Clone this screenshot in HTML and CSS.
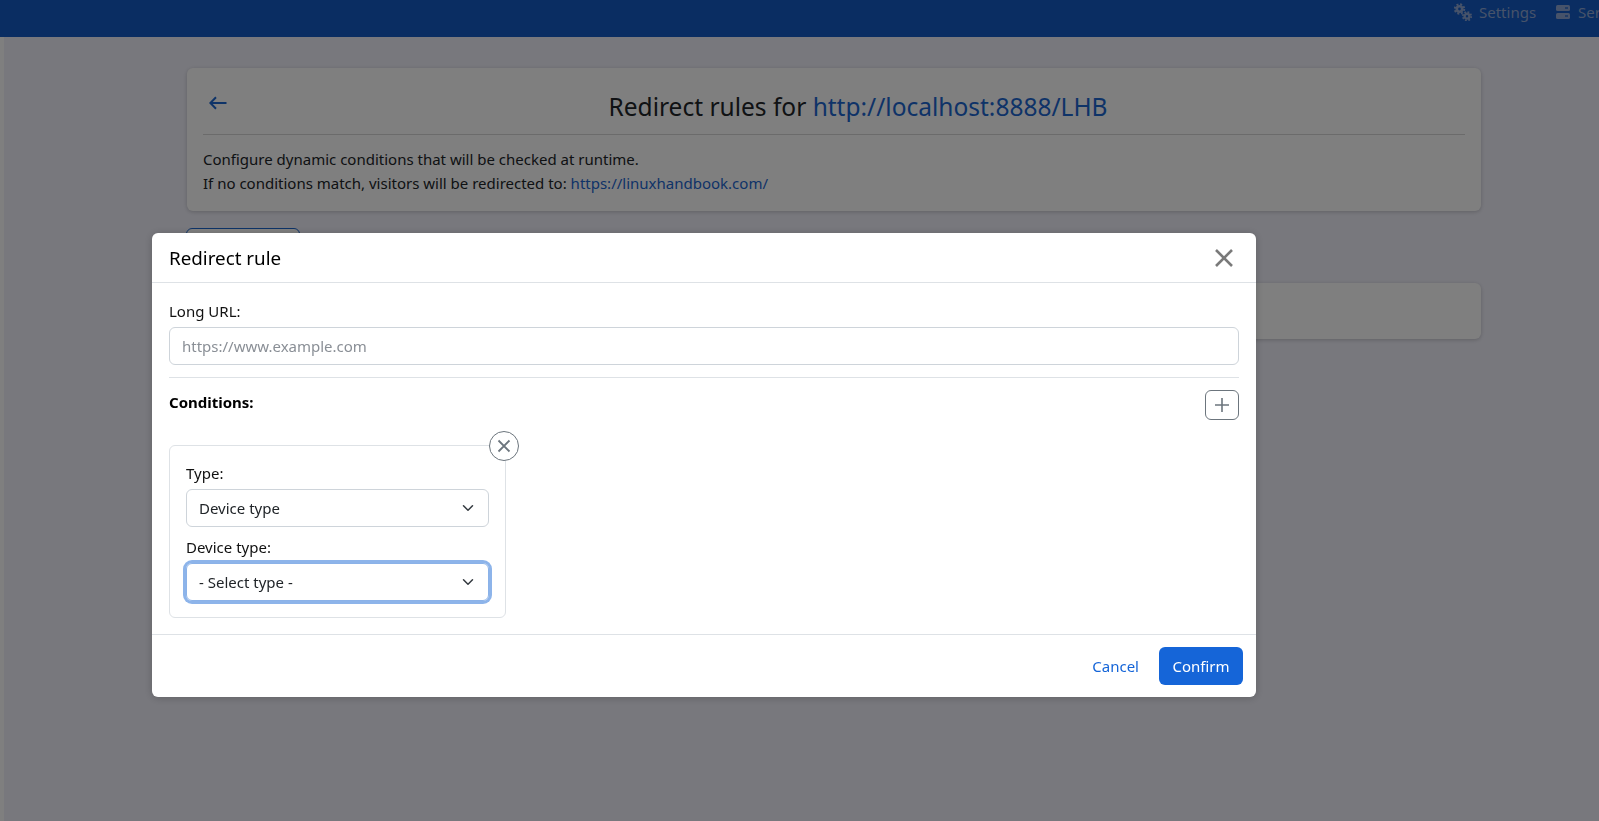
FILE: index.html
```html
<!DOCTYPE html>
<html lang="en">
<head>
    <meta charset="UTF-8">
    <title>Redirect rules</title>
    <link rel="stylesheet" href="styles.css">
</head>
<body>
    <!-- Top menu -->
    <nav class="topbar">
        <a class="topbar-link">
            <svg class="gears" viewBox="0 0 18 18">
                <circle cx="5.5" cy="6" r="2.7" fill="none" stroke="#8ea6d4" stroke-width="2.6"/>
                <circle cx="5.5" cy="6" r="4.7" fill="none" stroke="#8ea6d4" stroke-width="2" stroke-dasharray="2 1.7"/>
                <circle cx="13" cy="13.2" r="2.4" fill="none" stroke="#8ea6d4" stroke-width="2.4"/>
                <circle cx="13" cy="13.2" r="4.2" fill="none" stroke="#8ea6d4" stroke-width="1.8" stroke-dasharray="1.8 1.5"/>
            </svg>
            Settings
        </a>
        <a class="topbar-link">
            <svg class="servers" viewBox="0 0 14 14">
                <rect x="0" y="0" width="14" height="6" rx="1.5" fill="#8ea6d4"/>
                <rect x="0" y="8" width="14" height="6" rx="1.5" fill="#8ea6d4"/>
                <rect x="9" y="2.4" width="3" height="1.2" fill="#145bc4"/>
                <rect x="9" y="10.4" width="3" height="1.2" fill="#145bc4"/>
            </svg>
            Servers
        </a>
    </nav>

    <div class="layout">
        <div class="strip"></div>

        <!-- Page behind the dialog -->
        <main class="page">
            <section class="card head-card">
                <div class="head-row">
                    <a class="back-link">
                        <svg viewBox="0 0 18 14" width="18" height="14"><path d="M17.5 7H1.5M7 1.2 1.3 7 7 12.8" fill="none" stroke="#1c66d0" stroke-width="2"/></svg>
                    </a>
                    <h2 class="head-title">Redirect rules for <a class="page-link">http://localhost:8888/LHB</a></h2>
                </div>
                <hr class="head-line">
                <p class="head-text">Configure dynamic conditions that will be checked at runtime.<br>If no conditions match, visitors will be redirected to: <a class="page-link">https://linuxhandbook.com/</a></p>
            </section>
            <div class="add-rule"></div>
            <section class="card empty-card"></section>
        </main>
    </div>

    <div class="backdrop"></div>

    <!-- Dialog -->
    <div class="modal">
        <header class="modal-header">
            <h5 class="modal-title">Redirect rule</h5>
            <svg class="modal-close" viewBox="0 0 18 18"><path d="M1 1 17 17M17 1 1 17" stroke="#7a7a7a" stroke-width="2.6" fill="none"/></svg>
        </header>
        <div class="modal-body">
            <label class="field-label">Long URL:</label>
            <div class="input">https://www.example.com</div>
            <hr class="body-line">
            <div class="conditions-row">
                <b class="conditions-title">Conditions:</b>
                <button class="add-condition">
                    <svg viewBox="0 0 16 16" width="16" height="16"><path d="M8 1v14M1 8h14" stroke="#6c757d" stroke-width="1.6" fill="none"/></svg>
                </button>
            </div>
            <div class="condition">
                <button class="remove-condition">
                    <svg viewBox="0 0 16 16" width="16" height="16"><path d="M2.5 2.5 13.5 13.5M13.5 2.5 2.5 13.5" stroke="#6c757d" stroke-width="1.8" fill="none"/></svg>
                </button>
                <label class="field-label">Type:</label>
                <div class="select">Device type<svg class="caret" viewBox="0 0 16 16"><path d="m2 5 6 6 6-6" fill="none" stroke="#343a40" stroke-width="2" stroke-linecap="round" stroke-linejoin="round"/></svg></div>
                <label class="field-label second">Device type:</label>
                <div class="select focused">- Select type -<svg class="caret" viewBox="0 0 16 16"><path d="m2 5 6 6 6-6" fill="none" stroke="#343a40" stroke-width="2" stroke-linecap="round" stroke-linejoin="round"/></svg></div>
            </div>
        </div>
        <footer class="modal-footer">
            <a class="cancel">Cancel</a>
            <button class="confirm">Confirm</button>
        </footer>
    </div>
</body>
</html>
```

FILE: styles.css
```css
html, body {
    margin: 0;
    padding: 0;
    height: 100%;
    overflow: hidden;
}
body {
    font-family: "Noto Sans", sans-serif;
    font-size: 15px;
    color: #212529;
    background: #f1f1fb;
}
.topbar {
    height: 37px;
    box-sizing: border-box;
    padding-left: 1454px;
    background: #145bc4;
    display: flex;
    gap: 20px;
    color: #8ea6d4;
    white-space: nowrap;
    overflow: hidden;
}
.topbar-link {
    display: flex;
    align-items: center;
    gap: 7px;
    height: 24px;
}
.gears {
    width: 18px;
    height: 18px;
}
.servers {
    width: 14px;
    height: 14px;
    margin-right: 1px;
}
.layout {
    display: flex;
    height: calc(100% - 37px);
}
.strip {
    width: 4px;
    background: #fff;
}
.page {
    width: 1294px;
    margin: 31px 0 0 183px;
}
.card {
    background: #fff;
    border-radius: 6px;
    box-shadow: 0 1px 4px rgba(0, 0, 0, .2);
}
.head-card {
    padding: 0 16px;
    height: 143px;
    box-sizing: border-box;
}
.head-row {
    display: flex;
    align-items: center;
    height: 56px;
    padding-top: 10px;
}
.back-link {
    width: 42px;
    height: 14px;
    margin: -7px 0 0 6px;
    line-height: 0;
}
.head-title {
    flex: 1;
    margin: 0;
    text-align: center;
    font-size: 24.5px;
    font-weight: 400;
}
.page-link {
    color: #1c66d0;
}
.head-line {
    margin: 0 0 12px;
    border: 0;
    border-top: 1px solid #d6d6d6;
}
.head-text {
    margin: 0;
    line-height: 24px;
}
.add-rule {
    margin-top: 17px;
    width: 114px;
    height: 38px;
    margin-left: -1px;
    box-sizing: border-box;
    background: #fff;
    border: 1px solid #1c66d0;
    border-radius: 6px;
}
.empty-card {
    margin-top: 17px;
    height: 56px;
}
.backdrop {
    position: fixed;
    inset: 0;
    background: rgba(0, 0, 0, .5);
}
.modal {
    position: fixed;
    left: 152px;
    top: 233px;
    width: 1104px;
    height: 464px;
    display: flex;
    flex-direction: column;
    background: #fff;
    border-radius: 6px;
    box-shadow: 0 1px 8px rgba(0, 0, 0, .2);
}
.modal-header {
    height: 50px;
    flex: none;
    box-sizing: border-box;
    border-bottom: 1px solid #dee2e6;
    display: flex;
    align-items: center;
    justify-content: space-between;
    padding: 0 23px 0 17px;
}
.modal-title {
    margin: 1px 0 0;
    font-size: 18.8px;
    font-weight: 400;
    color: #000;
}
.modal-close {
    width: 18px;
    height: 18px;
}
.modal-body {
    flex: 1;
    padding: 16px 17px;
}
.field-label {
    display: block;
    color: #111;
    margin-bottom: 4px;
    line-height: 24px;
}
.input {
    height: 38px;
    box-sizing: border-box;
    border: 1px solid #ced4da;
    border-radius: 6px;
    padding: 0 12px;
    line-height: 36px;
    color: #8a8f96;
}
.body-line {
    margin: 12px 0;
    border: 0;
    border-top: 1px solid #dee2e6;
}
.conditions-row {
    display: flex;
    justify-content: space-between;
    align-items: flex-start;
    height: 55px;
}
.conditions-title {
    line-height: 24px;
    color: #000;
}
.add-condition {
    width: 34px;
    height: 30px;
    padding: 0;
    background: #fff;
    border: 1px solid #6c757d;
    border-radius: 6px;
    display: flex;
    align-items: center;
    justify-content: center;
}
.condition {
    position: relative;
    width: 337px;
    height: 173px;
    box-sizing: border-box;
    border: 1px solid #dee2e6;
    border-radius: 6px;
    padding: 15px 16px;
}
.remove-condition {
    position: absolute;
    top: -15px;
    right: -14px;
    width: 30px;
    height: 30px;
    padding: 0;
    border-radius: 50%;
    background: #fff;
    border: 1px solid #6c757d;
    display: flex;
    align-items: center;
    justify-content: center;
}
.select {
    position: relative;
    height: 38px;
    box-sizing: border-box;
    border: 1px solid #ced4da;
    border-radius: 6px;
    padding: 0 12px;
    line-height: 36px;
    color: #212529;
}
.focused {
    border-color: #8bb2e8;
    box-shadow: 0 0 0 3px #8db4ea;
}
.caret {
    position: absolute;
    right: 14px;
    top: 12px;
    width: 12px;
    height: 12px;
}
.second {
    margin-top: 8px;
}
.modal-footer {
    height: 63px;
    flex: none;
    box-sizing: border-box;
    border-top: 1px solid #dee2e6;
    display: flex;
    align-items: center;
    justify-content: flex-end;
    gap: 20px;
    padding: 0 13px;
}
.cancel {
    color: #1565d8;
}
.confirm {
    width: 84px;
    height: 38px;
    background: #1565d8;
    color: #fff;
    border: 0;
    border-radius: 6px;
    font: inherit;
}
```
